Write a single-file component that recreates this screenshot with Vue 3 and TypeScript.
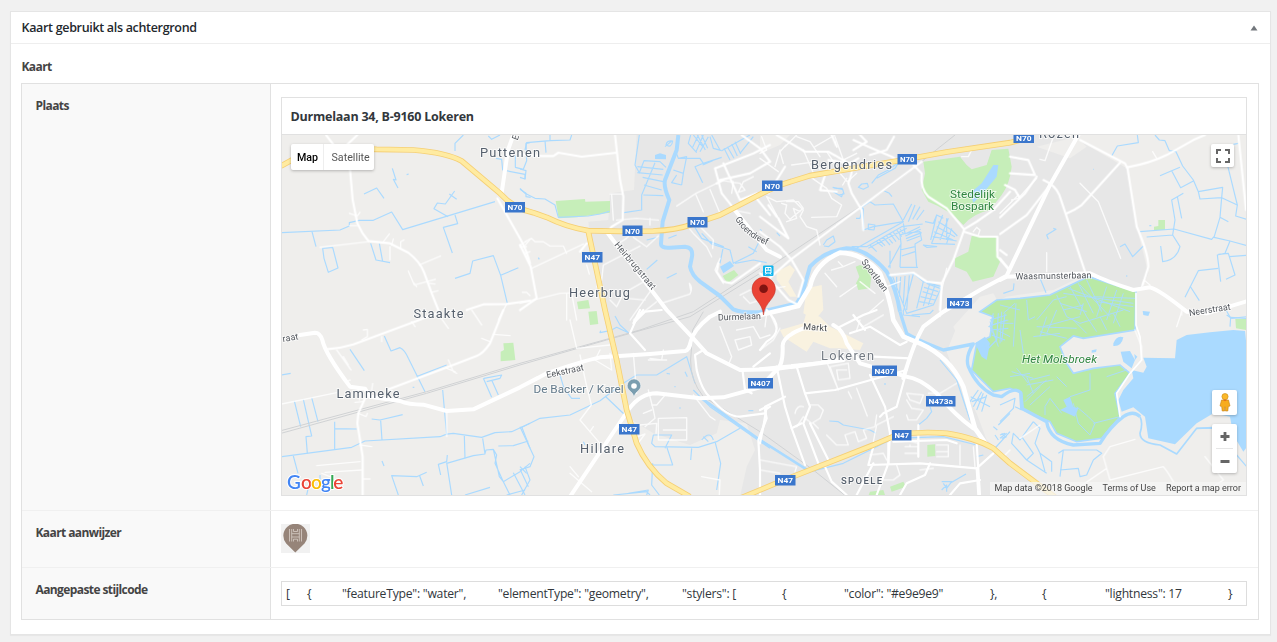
<script setup lang="ts">
interface Label { t: string; x: number; y: number; w: number; s?: number; r?: number; c?: string }
interface Shield { t: string; x: number; y: number; w: number }
interface Tile { x: number; y: number; water: string[]; minor: string[]; road: string[] }

const tiles: Tile[] = [
  {
    x: 0, y: 0,
    water: [
      'M5 308L180 300L208 288V278L238 271H280L335 246L368 299L645 215', 'M337 115L348 150L340 148L354 174', 'M252 192L290 174L312 205',
      'M504 260L462 236L472 219L496 222L524 183M508 192L530 208', 'M525 255L533 281L490 292L517 369', 'M96 305L108 350',
      'M128 355L158 352L174 414L145 427L132 385Z', 'M272 340L288 390L330 398M298 340L308 395',
      'M525 445L570 430L578 393L640 377L662 436L715 413M662 436L682 520', 'M550 15L525 40V63', 'M625 18L635 28L660 15',
      'M648 85L665 88L668 120L735 133V148', 'M720 178L738 190V200L752 202', 'M380 134L386 132', 'M706 75V112L730 118L740 92L738 40L750 38',
    ],
    minor: [
      'M120 352L265 335', 'M310 335L328 312M335 345L340 327M362 355L362 335L372 330', 'M330 350V390', 'M418 405L482 378',
      'M208 250L232 258L240 247M208 287H232', 'M385 423L403 465L466 448M403 460L410 470M447 460L465 462M455 487L474 482',
      'M680 522L655 570', 'M732 350L750 328M735 370L750 365', 'M727 487L740 487L750 497',
    ],
    road: ['M138 15L165 50', 'M232 15L195 50', 'M210 118L218 210L232 280Q245 310 265 333L330 340L385 368Q420 395 432 427L455 490L475 540', 'M560 540L610 523L680 522L750 512', 'M652 205L720 325Q740 360 750 400'],
  },
  {
    x: 720, y: 0,
    water: [
      'M15 60L20 38L90 32V15M90 32L150 30L155 15M75 32L78 68', 'M0 117L18 122L15 147L0 142', 'M0 175L15 190L45 205L75 207L105 225L115 262L205 258L240 252L268 244',
      'M358 15L345 105L358 128L372 92L420 95L438 112', 'M352 110L430 118M352 128L428 135M368 142L430 155M372 165L425 180M370 195L430 197M405 98L365 195L365 240L312 248',
      'M435 50L455 33M438 45Q440 30 458 33Q455 55 438 45', 'M512 15L505 40L530 68M520 15L548 50M532 15L556 60M545 15L563 55M518 52L535 15M528 65L550 15M540 65L565 20M575 15L600 60M570 20L580 55L605 62',
      'M470 72L475 85L500 80L490 130L460 120M475 85L540 85L550 100L525 110L548 158M550 100L605 82M485 165L455 158L470 135M490 130L485 165M548 105L578 92',
      'M612 55L630 90M622 50L642 85M635 42L652 78M645 35L662 72M605 62L690 15M660 70L700 20',
      'M525 293L545 325L610 350L600 400M545 310L575 342L630 360L640 400L700 370L715 340M645 400L700 390L740 398M685 350L710 365',
      'M380 330L410 323M445 325L470 315M440 445L470 430M380 418L412 390', 'M55 383L58 388',
    ],
    minor: [
      'M15 335L35 325L45 335H70L90 348H130L140 370', 'M0 345L18 335M20 350L0 350', 'M35 415L190 342', 'M0 520L120 490L260 485M155 490L170 570', 'M140 490V570',
      'M270 192H305M275 195L280 270', 'M290 270L350 265L415 270M390 265V285', 'M340 322L380 350L415 318M325 320L300 338L320 325', 'M360 348L250 405L245 450',
      'M395 478L330 570M380 450L310 490L290 530L270 510', 'M430 518L510 492Q520 470 508 460L512 480', 'M200 405L208 432M230 470L248 468M340 570L410 515M375 510L320 505',
      'M470 228L528 190L590 160M528 195L550 245M570 178L600 250', 'M495 280L520 310L560 350L575 380M520 270L580 330L578 355M600 385L585 420L610 460',
      'M600 150L660 160L675 180L655 187L670 155L700 140M640 155L635 190', 'M690 250L640 240', 'M660 495L690 480L750 470M670 500L690 520L750 500',
    ],
    road: [
      'M0 72L65 78H100L115 68L185 80L290 68', 'M285 15L300 150L310 200L308 270L275 290L260 310', 'M0 345L32 410L50 505M0 540L50 505',
      'M585 115L700 70L750 45M585 115L605 190L645 240M610 100L660 210L710 190M600 150L690 130L750 95', 'M665 15L720 55L750 95', 'M705 200L750 255M590 160L610 150',
      'M180 365L200 340', 'M720 400L635 460L610 455L590 425L595 400',
    ],
  },
  {
    x: 1440, y: 0,
    water: [
      'M218 172L248 178L252 192L235 195M220 185L245 200L248 190M222 175H248', 'M295 172L305 162L322 160L325 170L310 178Z', 'M335 160L355 135L385 120L418 95L405 115L350 145',
      'M372 182L388 190L396 200', 'M190 345L200 330L220 318L225 335L205 350L192 348', 'M288 265H300L308 230L330 215L345 225L400 222L430 275L340 290L310 300V235',
      'M325 282L345 285L342 300L325 298Z', 'M290 355L430 275M275 350L320 350L425 290L488 282M325 355L440 295M330 345L350 365M350 335L368 350M358 330L375 347M370 322L390 345M380 318L398 340M390 310L408 335M400 307L418 330M410 300L425 320M420 297L430 310',
      'M430 280L435 310L420 315L423 340L420 412M435 310L480 305L485 330L465 342L470 410M435 312L480 290M436 318L482 298M438 326L485 308M440 333L480 318M420 412H474M390 362V415M385 412L423 342M420 360L465 350M425 378L465 365',
      'M430 270L455 222M445 275L465 225M458 268L480 230M470 270L492 240', 'M495 275L520 280L530 255L512 330M530 255L550 265M548 255L515 340L585 343M565 265L540 330M535 275L575 300L592 318M530 290L585 320M522 305L580 330M518 320L590 333M575 295L560 340M560 265V330',
      'M490 345L530 350L500 352Z', 'M400 435L460 430L490 455L545 470L520 525L440 550L398 440M410 440V480M422 440L418 500M435 438L430 520M448 436L440 540M460 432L430 545',
      'M490 455L470 535M500 460L540 475M492 472L535 485M488 485L530 498M482 500L525 510M478 515L518 522M510 458L490 528M525 465L505 525', 'M50 308L60 318', 'M0 298L5 302',
    ],
    minor: [
      'M0 85L55 125M45 110L60 60M0 70L20 60L5 20', 'M75 50L110 15M78 45L60 65L70 100M130 60L165 140', 'M110 20L150 35L180 80M165 50L225 15M200 65L230 110M225 20L250 90L290 70',
      'M150 140L200 175L215 205L245 225L230 260L155 262', 'M95 105L170 95L180 118M260 145L248 165M240 130L262 155L290 130',
      'M65 220L80 225L75 250L90 268L130 235L115 215H80M80 275L110 265L100 235L120 245', 'M20 200L50 215L100 210L130 240L120 260L140 290L170 300L180 345M85 325L55 265L20 200',
      'M215 420L250 410L235 395M250 410L285 395M195 430L230 470M0 480L75 470M300 455L345 490', 'M240 500L290 465M330 545L370 510', 'M380 470L420 455',
      'M635 60L625 80H605M600 55V65', 'M640 305L650 292L660 300L655 315', 'M560 415L545 480L540 560',
    ],
    road: [
      'M50 15L135 65L205 65L275 105Q280 120 265 160L275 190L305 240L310 300', 'M280 30L325 50L395 80L412 90', 'M330 75L380 60L402 20M215 15L230 50',
      'M485 95L90 390L0 470', 'M460 105L485 130Q480 175 505 200L560 235L610 295', 'M750 185L700 240L650 275L612 298', 'M612 300L580 390L545 460L540 540', 'M612 305L660 320L712 320L712 380L750 420',
      'M0 260L85 325L55 265M25 225L50 260M0 305L60 350L95 390L130 450L115 500', 'M0 430L50 470L85 510L115 525', 'M75 110L25 190', 'M200 120L180 180L230 185',
      'M205 90L270 100L295 85', 'M300 15L320 35L280 60', 'M390 435L460 428L500 455L545 460',
    ],
  },
  {
    x: 2160, y: 0,
    water: [
      'M335 78L352 48L415 38L412 15', 'M465 15L478 30L495 32L508 62L528 65L548 108L580 150L595 185L668 172L665 203L712 225L680 95M480 137L515 122L540 112M515 122L542 173L580 153M595 185L600 207L665 203',
      'M712 225L707 258L740 268M665 203L660 262L685 275M660 262L642 322L690 333L740 347M420 305L522 297L635 328L642 320', 'M550 190L515 210L525 270L518 315L540 350Q530 390 488 395L482 348M532 200L545 265M440 321L518 315',
      'M690 333L675 370L652 375L662 455M655 373L685 370L705 435L678 448M688 380L740 376', 'M655 415L595 422L555 502M570 468L598 512', 'M360 350L375 342L398 380L430 348', 'M145 328L140 315L168 298L160 295', 'M700 43L715 40', 'M378 438H382', 'M120 445L138 488', 'M10 490L40 480L42 460', 'M680 555L695 565L740 560', 'M280 118H282', 'M448 287H454',
    ],
    minor: ['M162 15L135 92L120 88', 'M240 160L295 215L362 385', 'M140 368V425', 'M545 545L530 590', 'M425 470L432 450L450 465', 'M458 65L470 85', 'M110 145L55 205L35 210M55 195L0 250'],
    road: [
      'M240 30L375 100L382 115M382 112Q450 100 500 75L580 30L615 15', 'M382 112L410 290Q445 370 445 410L428 465', 'M360 98L245 225Q225 240 200 250', 'M130 150Q165 165 178 195L255 425',
      'M715 15L738 240', 'M30 80L85 90L105 135L30 130M110 140L75 190L0 262M15 165L45 180L60 205M150 165L80 255L0 312', 'M0 385L25 418', 'M0 360L20 375',
    ],
  },
  {
    x: 0, y: 540,
    water: [
      'M5 195L32 190', 'M313 78L333 123L360 113Q375 120 385 145L435 245M410 200L500 165', 'M210 118L253 182', 'M398 232H403', 'M488 240L500 375', 'M275 327L300 330L368 314M302 332L306 390',
      'M5 440L215 412L255 393L480 380Q500 370 520 370L605 382L645 368L695 365L750 340', 'M43 273L62 350M70 268L95 378L78 380L82 430M95 263L114 335M164 335V417M164 356L230 357', 'M40 438L54 490M120 495V520M88 520L80 555',
      'M306 453L312 468', 'M355 555L335 497L410 500L440 487M418 495L430 528', 'M482 495L475 463L500 455L502 435M500 458L515 555M500 460L580 437L615 432L608 385M615 430L618 420L640 418L658 500L670 515L720 485L750 460M640 418L650 435L645 460L670 515L690 555',
      'M553 378L555 445M555 555L630 532M655 408L700 407L745 393M725 350L750 415', 'M700 488L735 555M720 478L745 530M680 555L735 540', 'M610 205L635 262M635 210L655 255M612 205L665 195L660 205L620 215', 'M740 490L720 470',
    ],
    minor: ['M170 120L213 180M190 140L205 165', 'M250 60L262 58V80L245 90M305 80V95', 'M5 282L170 248', 'M225 277L250 275M275 240L278 220M230 230L240 255L238 270', 'M235 310L258 320L262 310', 'M110 467L240 455M135 487L245 480M250 507H270M240 405L275 410', 'M480 20L505 55M575 0L605 45M395 35L405 50', 'M500 175L525 185M505 150L520 185L530 190M605 85L630 95M640 73L690 77', 'M500 310V380', 'M200 215L210 210M150 500L125 490'],
    road: ['M140 118Q180 115 220 103L410 33L480 5', 'M670 0L630 100Q610 130 590 138L500 172L320 240', 'M255 265L235 310L232 340L248 440L248 555'],
  },
  {
    x: 720, y: 540,
    water: [
      'M285 18L300 45L325 68L290 52L270 62L240 68L242 62', 'M120 195L132 235L155 265L180 265', 'M0 355L60 325L150 315L240 272L270 250L310 220L350 195L410 195L500 140L525 220M255 258L315 315', 'M0 350L42 440L30 470L0 480M15 470L30 510L5 555',
      'M440 190L450 192M495 185L502 200M465 228V232M480 292V296', 'M280 555L380 545L390 555M325 550L385 540L380 555M398 460L395 525L418 555',
      'M435 415L455 375L400 375L395 400L405 410L535 412L590 395L660 355M545 390Q570 360 580 390M550 380L565 395M515 415L512 450M585 395L602 460L590 540M440 410L458 465H398', 'M520 240L570 290L750 415', 'M685 302H700', 'M190 395L195 405',
    ],
    minor: ['M150 30L170 115L270 105', 'M180 135L198 220L214 285L180 330L240 400', 'M270 130L275 180L225 150L240 120M340 130L350 250', 'M430 120L425 150L390 145M440 150H385', 'M385 240L400 300L405 325L375 350M370 310L395 300M440 250L410 285H395', 'M415 325L500 323V390H415ZM430 360H500M360 345L410 340L408 370', 'M150 490L215 545M150 470L175 500', 'M520 255L570 320L585 330', 'M545 500L600 510L598 555', 'M210 365L220 350', 'M340 385L375 372L350 405', 'M645 90L690 80L695 105L655 120ZM600 50L635 140L625 165M650 60L700 50L720 85L750 75'],
    road: [
      'M370 0L350 25L330 70L375 120', 'M525 135L550 120L565 135M525 135L530 180Q545 240 570 262', 'M500 120L515 85', 'M668 185L675 240L695 250', 'M570 262Q620 320 660 320L735 310', 'M750 290L735 300L740 325L715 390L720 480L720 555', 'M750 130L700 170M360 0L340 40L375 5L425 0',
    ],
  },
  {
    x: 1440, y: 540,
    water: ['M455 15L510 10L520 0M430 0L430 15L480 20', 'M540 150L590 210L630 330', 'M208 333L235 335L250 345L330 360L348 370', 'M475 345L500 325L515 305L510 290', 'M655 240L630 275M665 245L640 290M670 250L650 300M680 255L665 305M632 260L690 290M635 275L680 260', 'M700 350L712 360M705 375L715 390M725 370L735 380M720 385L740 370M700 420L750 365M750 310L715 345', 'M0 388L150 485L250 460L350 410L400 385L550 380L650 405', 'M545 515L575 515L560 535L550 520M570 520L618 492M545 540L560 525L560 545', 'M650 440L670 435', 'M372 222H378', 'M700 10L690 50L710 90L680 120L670 100M690 30L740 15M695 45L745 30M690 60L745 55M695 75L735 90M715 10L710 90M735 10L725 95'],
    minor: ['M200 155L235 240L210 170L265 160L270 205L235 210L230 180L260 180M265 245L275 265M290 235L322 318', 'M150 285L175 285L190 300L180 325L155 340L130 320L110 350M105 310Q110 285 130 290M160 340L175 355', 'M200 375L230 405L265 405L255 375L285 365L295 395L320 385L310 360L345 350L350 315', 'M440 250L490 255L480 280L450 270L440 250M440 270L455 295L490 300L470 330L445 330L440 315', 'M435 410H475V440M435 430H470M450 405V410M530 405H565V440H530M530 425H565M600 405V465M640 410L645 470M440 390L475 400', 'M60 55L40 90L0 120M30 10L50 55', 'M15 50L20 10M300 30L290 60M310 50L370 15', 'M505 250L540 250L590 220', 'M400 320L350 345L340 395', 'M0 375L15 330M0 450L110 470L105 485M0 480L60 490', 'M330 435L370 430L380 450M410 465L420 495L400 510L360 510M480 480L520 475'],
    road: [
      'M50 170L75 290L95 355L135 465M110 170L135 250L150 290L130 340L175 460', 'M150 340L210 460', 'M0 300L20 290L10 350L0 400M15 290L75 260M95 355L125 340', 'M135 250L225 240L440 180', 'M330 195L375 290L390 370L385 460', 'M435 200L410 290L370 310L360 320',
      'M340 410L325 465L480 460L650 475L700 430M195 470L215 515L260 555M340 460L290 555M385 400V460L350 555M650 400L660 555M650 475L655 555', 'M510 460L495 495L440 520L420 555M660 510L600 520L570 555', 'M240 50L310 15L350 0M270 70L330 50L420 105L440 95M280 15L315 60', 'M340 140L450 145M20 0Q80 60 20 95L0 120',
      'M475 345L475 440M400 395L560 390L590 400', 'M0 175L55 170L200 155L250 140',
    ],
  },
  {
    x: 2160, y: 540,
    water: [
      'M690 50L692 22L740 25M678 0L692 25', 'M0 285L45 265L40 295L0 335M45 290L65 300', 'M100 335L60 390L40 370L35 400L80 450L100 430L65 380M100 335L120 355L105 400L120 430L155 455V485M120 430L135 485M80 450L140 490', 'M175 430L190 420L180 500M190 420H290L305 430L280 450L260 495L240 500L235 475L180 480M280 450L300 433M0 375L15 370M5 385L20 380', 'M740 470L710 435', 'M590 355H640',
    ],
    minor: ['M405 60L425 110L425 150', 'M545 0L545 15', 'M310 440L330 410L405 388M310 440L330 510L490 470Q500 480 520 515M320 475L240 530', 'M615 440L670 510L640 530', 'M120 345L60 385', 'M10 440L30 420'],
    road: [],
  },
]

const marsh: string[] = [
  'M2240 510L2245 570L2265 560M2330 495L2360 560L2400 580L2530 540', 'M2270 570L2320 510L2360 500M2290 590L2400 560', 'M2370 470L2420 560M2395 460L2440 550M2420 450L2465 545M2350 490L2560 520M2365 475L2550 545M2400 465L2490 560',
  'M2480 470L2450 560M2510 480L2480 570M2530 490L2500 580M2380 570L2420 610M2420 560L2450 605M2460 560L2480 600M2500 550L2520 590', 'M2270 590L2390 595M2280 605L2360 625M2260 620L2340 610M2300 560L2280 620M2330 540L2300 610',
  'M2190 740L2250 730M2195 725L2260 745M2210 715L2245 760', 'M2240 740L2260 790M2240 765L2320 750M2240 800L2300 750M2235 815L2280 770M2250 825L2310 770', 'M2295 855V830L2310 805L2345 850M2370 800L2430 780V730M2380 820L2395 880L2430 915L2445 880L2425 860L2390 830M2440 880L2520 860M2480 740L2540 720', 'M2250 750L2310 735M2330 740L2360 770',
  'M2160 580H2200M2170 550L2205 520M2150 600L2190 620M2125 590L2180 570M2130 575L2155 650M2165 545L2160 640', 'M2410 520L2400 555M2440 500L2565 505M2450 515L2560 530M2340 520L2420 545M2350 540L2410 525', 'M2208 520L2200 650M2220 600L2230 670M2160 525L2220 540',
]

const parks: string[] = [
  'M827 213L915 207L916 215L990 213V248L890 262L836 265Z', 'M891 515L925 510L930 535L895 538Z', 'M925 545L950 543L955 582L930 585Z', 'M1328 438L1362 420L1375 435L1342 460Z', 'M670 640L700 638L706 690L662 694V665L672 660Z',
  'M1727 410L1740 405L1765 415L1775 425L1770 475L1735 480L1728 460L1738 440Z', 'M1930 95L2040 80L2060 105L2075 118L2120 105L2135 60L2185 56L2195 110Q2190 160 2165 195L2130 240Q2080 250 2050 285Q2010 240 1945 215L1925 180L1935 130Z',
  'M2075 318L2150 322L2148 360L2160 395L2140 440L2078 455L2060 425L2025 410V385L2065 365Z', 'M2635 270H2655V300H2622V290L2635 288Z', 'M2866 567H2900V600L2868 595Z', 'M1942 945L1965 943L1966 978L1942 980Z', 'M1766 1095L1770 1085L1810 1080L1815 1095Z', 'M1830 1070L1870 1055L1878 1070L1835 1085Z',
]

const majors: string[] = [
  'M60 615L105 608Q120 608 127 630Q135 670 210 770L255 776L270 800L360 813Q385 824 430 824L500 843L580 838L720 772L800 730Q900 695 960 682L1110 672L1215 663Q1230 660 1232 635Q1240 600 1290 560L1320 545',
  'M985 312L1160 540L1235 620L1280 670L1380 720L1480 718',
  'M870 1100L1045 840Q1080 790 1130 790L1260 805L1330 802L1440 772L1485 725Q1510 710 1508 650Q1505 620 1570 595',
  'M1480 718L1690 690', 'M1660 585Q1690 600 1700 640L1740 700L1880 740Q1920 745 1970 790Q2030 860 2080 895',
  'M2395 15L2310 165L2180 437L2100 480L1990 545L1930 590Q1900 640 1870 745',
  'M2160 450L2180 440L2430 430Q2480 455 2560 480L2610 472Q2640 480 2720 545L2780 550L2900 514',
  'M1360 235L1460 360L1500 380',
]

const highways: string[] = [
  'M3 108L40 88C120 60 200 54 290 58L400 60Q500 68 545 93L660 190Q700 235 760 248L800 262Q860 292 925 302L1020 304L1120 303Q1190 300 1230 285L1320 255L1450 188L1500 165L1590 137L1850 93L2000 66L2190 38L2240 25',
  'M925 305L975 540L1010 690L1040 840L1070 940Q1100 1010 1160 1060L1230 1100',
  'M1380 1105L1440 1080L1500 1055L1640 1000L1780 945L1850 915Q1920 903 2000 910Q2090 925 2140 955L2190 1000L2250 1045L2330 1105',
]

const labels: Label[] = [
  { t: 'Puttenen', x: 480, y: 157, w: 60 }, { t: 'Bergendries', x: 811, y: 168.5, w: 81 }, { t: 'Heerbrug', x: 569, y: 297, w: 61 }, { t: 'Staakte', x: 413.5, y: 318, w: 50 },
  { t: 'Lammeke', x: 336.5, y: 398, w: 63 }, { t: 'Hillare', x: 580, y: 453, w: 44 }, { t: 'Lokeren', x: 821, y: 359.5, w: 53, c: 'light' }, { t: 'Rozen', x: 1039, y: 138, w: 40 },
  { t: 'SPOELE', x: 841, y: 484, w: 41, s: 9.5, c: 'medium' }, { t: 'Markt', x: 803, y: 329.5, w: 24, s: 9, r: 4, c: 'dark' },
  { t: 'Durmelaan', x: 718, y: 320.5, w: 43, s: 9, r: -2, c: 'street' }, { t: 'Heirbrugstraat', x: 614, y: 245, w: 59, s: 9, r: 50, c: 'street' },
  { t: 'Eekstraat', x: 547, y: 378, w: 38, s: 9, r: -12, c: 'street' }, { t: 'Sportlaan', x: 861, y: 262, w: 38, s: 9, r: 53, c: 'street' },
  { t: 'Waasmunsterbaan', x: 1015.5, y: 279.5, w: 76, s: 9, r: -1, c: 'street' }, { t: 'Neerstraat', x: 1189.5, y: 316, w: 42, s: 9, r: -9, c: 'street' },
  { t: 'raat', x: 283, y: 342, w: 16, s: 9, r: -10, c: 'street' },
  { t: 'De Backer / Karel', x: 533.5, y: 393, w: 90, s: 11.8, c: 'poi' },
  { t: 'Stedelijk', x: 950, y: 197.5, w: 45, s: 11.8, c: 'park' }, { t: 'Bospark', x: 951, y: 209.5, w: 43, s: 11.8, c: 'park' },
  { t: 'Het Molsbroek', x: 1022, y: 362.5, w: 75, s: 11.8, c: 'park italic' },
]

const shields: Shield[] = [
  { t: 'N70', x: 505, y: 202, w: 20 }, { t: 'N70', x: 622.5, y: 225.5, w: 20 }, { t: 'N70', x: 687.5, y: 217, w: 20 }, { t: 'N70', x: 762, y: 180.5, w: 20.5 },
  { t: 'N70', x: 897.5, y: 154, w: 19.5 }, { t: 'N70', x: 1013.5, y: 132.5, w: 20.5 }, { t: 'N47', x: 582, y: 252, w: 20.5 }, { t: 'N47', x: 619, y: 424, w: 20.5 },
  { t: 'N47', x: 892, y: 430, w: 19.5 }, { t: 'N47', x: 775, y: 475, w: 20.5 }, { t: 'N407', x: 748, y: 378, w: 25 }, { t: 'N407', x: 872, y: 365.5, w: 25 },
  { t: 'N473', x: 947, y: 298, w: 25 }, { t: 'N473a', x: 926, y: 396, w: 29.5 },
]

const logo = [
  { t: 'G', x: 287, c: '#4285f4' }, { t: 'o', x: 301, c: '#ea4335' }, { t: 'o', x: 311, c: '#fbbc05' },
  { t: 'g', x: 321, c: '#4285f4' }, { t: 'l', x: 330, c: '#34a853' }, { t: 'e', x: 333.3, c: '#ea4335' },
]

const style: string[] = ['[', '{', '"featureType": "water",', '"elementType": "geometry",', '"stylers": [', '{', '"color": "#e9e9e9"', '},', '{', '"lightness": 17', '}']
</script>

<template>
  <div class="page">
    <section class="postbox">
      <header class="handle">
        <h2>Kaart gebruikt als achtergrond</h2>
        <svg width="8" height="6" viewBox="0 0 8 6"><path d="M0.5 5.5L4 0.5L7.5 5.5Z" fill="#72777c" /></svg>
      </header>
      <div class="field-title">Kaart</div>
      <div class="fields">
        <div class="row place">
          <div class="name">Plaats</div>
          <div class="value">
            <div class="map-box">
              <div class="address">Durmelaan 34, B-9160 Lokeren</div>
              <div class="map">
                <svg class="canvas" viewBox="282 135 964 360" width="964" height="360">
                  <g transform="translate(280 130) scale(0.333333)">
                    <path fill="#e7e7e7" d="M1070 15L1062 180L990 190L985 270L925 275L930 320L975 540L1040 860L1120 910L1230 945L1310 910L1320 870L1400 880L1425 960L1400 1010L1380 1100H2320L2240 1030L2120 930L2090 850L2020 720L2000 665L2030 590L2090 540L2180 500L2320 480L2425 430L2560 480L2590 470L2605 430L2570 290L2540 115L2395 30L2340 15Z" />
                    <path fill="#efeeec" d="M1440 15H1530L1500 45L1440 70ZM2270 50L2390 20L2420 50L2370 85ZM2100 500L2140 490L2160 525L2110 560L2090 640L2040 630L2020 590Z" />
                    <path fill="#f9f2e0" d="M1500 600L1570 580L1580 545L1620 560L1650 590L1690 610L1750 640L1740 660L1680 655L1650 655L1600 635L1580 665L1540 640L1510 620ZM1490 425L1530 405L1545 420L1525 455L1550 500L1530 500L1490 450ZM1580 475L1625 465L1630 540L1605 570L1570 550Z" />
                    <path v-for="d in parks" :key="d" :d="d" fill="#c6eeb9" />
                    <path fill="#b9e9a6" stroke="#aadaff" stroke-width="5" d="M2100 545L2150 510L2220 505L2310 495L2425 440L2568 485L2565 600L2410 625L2380 618L2340 650L2360 700L2380 730L2440 715L2520 705L2550 730L2505 790L2520 860L2465 925L2390 935L2330 910L2310 875L2230 840L2225 790L2190 775L2140 785L2075 720L2090 640L2130 620L2140 560Z" />
                    <g class="water" stroke-width="2.8"><path v-for="d in marsh" :key="d" :d="d" /></g>
                    <path fill="#aadaff" d="M2085 640L2115 620L2130 640L2120 690L2105 680ZM2350 810L2370 800L2380 830L2395 835L2385 860L2340 840L2360 830ZM2500 640Q2510 615 2530 622Q2525 650 2500 648ZM2522 665L2550 663L2565 690L2555 715L2530 695ZM2563 672L2572 680L2565 690ZM2435 661L2450 658L2448 666L2435 668ZM2588 543L2610 545L2605 558L2590 555Z" />
                    <path fill="#aadaff" d="M2590 683L2685 685L2690 630L2720 615L2790 607L2860 600L2895 603L2902 670V950L2890 965L2860 915L2850 860L2800 850L2750 880L2685 943L2605 925L2595 860L2560 832L2525 845L2515 810L2530 780L2560 745L2555 720L2590 728L2600 710Z" />
                    <path fill="#aadaff" d="M1125 75L1140 70L1158 75V88L1125 87ZM1320 410L1350 393L1362 408L1330 430ZM2070 190L2105 160L2140 105L2155 105L2150 140L2100 200L2080 218Z" />
                    <g class="water" stroke-width="3.5">
                      <g v-for="t in tiles" :key="`${t.x}-${t.y}-w`" :transform="`translate(${t.x} ${t.y})`"><path v-for="d in t.water" :key="d" :d="d" /></g>
                    </g>
                    <g class="rail">
                      <path d="M3 910L440 790L720 705L980 630L1230 560L1440 430L1830 170L2025 15" />
                      <path d="M3 902L440 785L720 700L1080 600L1240 545L1440 415" />
                      <path d="M1270 545L1238 600L1232 690Q1230 750 1270 800L1440 905L1600 1020L1700 1100" />
                    </g>
                    <g class="water">
                      <path stroke-width="12" d="M1195 15L1190 60L1155 150Q1150 170 1168 210L1148 275L1143 340Q1142 355 1170 353L1215 350Q1240 352 1236 380L1230 410Q1235 435 1260 455L1320 498L1360 538Q1390 550 1440 546L1550 520Q1565 500 1570 480L1590 410Q1630 365 1700 355Q1760 355 1820 425Q1850 480 1860 545" />
                      <path stroke-width="10" d="M1860 545L1880 610Q1900 625 1990 660L2080 642Q2055 680 2065 710Q2090 770 2140 795L2165 800Q2205 768 2222 788L2225 835L2300 875Q2308 930 2380 945L2460 940Q2490 890 2530 860Q2560 840 2580 860" />
                      <path stroke-width="5" d="M2580 860Q2590 880 2580 910Q2580 940 2640 945L2690 972L2750 895L2800 893" />
                      <path stroke-width="8" d="M1265 805L1440 930L1590 1025" />
                    </g>
                    <g class="road" stroke-width="4.2" opacity="0.8">
                      <g v-for="t in tiles" :key="`${t.x}-${t.y}-m`" :transform="`translate(${t.x} ${t.y})`"><path v-for="d in t.minor" :key="d" :d="d" /></g>
                    </g>
                    <g class="road" stroke-width="6.5">
                      <g v-for="t in tiles" :key="`${t.x}-${t.y}-r`" :transform="`translate(${t.x} ${t.y})`"><path v-for="d in t.road" :key="d" :d="d" /></g>
                      <path stroke-width="5" d="M2550 730L2510 790L2520 860M2550 730L2585 690L2580 620L2568 585V490" />
                    </g>
                    <g class="road" stroke-width="12">
                      <path v-for="d in majors" :key="d" :d="d" />
                      <path d="M700 15L684 60L664 195" />
                      <path stroke-width="14" d="M1440 555L1555 528L1590 470Q1605 400 1680 368Q1750 370 1800 430Q1830 500 1840 570L1870 620L1920 640Q2010 680 2050 770L2085 895L2120 945" />
                    </g>
                    <g class="highway-case"><path v-for="d in highways" :key="d" :d="d" /></g>
                    <g class="highway"><path v-for="d in highways" :key="d" :d="d" /></g>
                  </g>

                  <path id="groendreef" fill="none" d="M735 219Q746 238 770 246" />
                  <text class="label street" font-size="9"><textPath href="#groendreef" textLength="42">Groendreef</textPath></text>
                  <text
                    v-for="l in labels" :key="l.t" class="label" :class="l.c" :x="l.x" :y="l.y" :font-size="l.s ?? 12.8"
                    :textLength="l.w" :transform="`rotate(${l.r ?? 0} ${l.x} ${l.y})`"
                  >{{ l.t }}</text>
                  <g v-for="(s, i) in shields" :key="i">
                    <rect :x="s.x" :y="s.y" :width="s.w" height="10.5" fill="#3a76cc" />
                    <text class="shield" :x="s.x + 2.5" :y="s.y + 8.2" :textLength="s.w - 5" lengthAdjust="spacingAndGlyphs">{{ s.t }}</text>
                  </g>

                  <text x="512" y="139" class="label street" font-size="9" transform="rotate(-70 516 136)">E</text>
                  <path d="M634 397.5C633 391 627.2 391 627.2 385.7A6.8 6.8 0 0 1 640.8 385.7C640.8 391 635 391 634 397.5Z" fill="#7b9eb0" stroke="#fff" stroke-width="0.5" />
                  <circle cx="634" cy="386" r="2.8" fill="#fff" />
                  <rect x="763" y="265.5" width="10.5" height="10.5" rx="1" fill="#12b5ee" />
                  <path d="M765.5 267.5H771V273H765.5ZM765.5 270.2H771M768.2 267.5V270M766.5 273L765.5 274.5M770 273L771 274.5" fill="none" stroke="#fff" />
                  <path d="M763.5 315C762.5 302 752 299 752 289A11.7 11.7 0 0 1 775.4 289C775.4 299 764.8 302 763.5 315Z" fill="#ea4335" stroke="#b8352a" stroke-width="0.5" />
                  <circle cx="763.6" cy="288.7" r="4.3" fill="#811411" />
                  <text v-for="(g, i) in logo" :key="i" class="logo" :x="g.x" y="489" :fill="g.c">{{ g.t }}</text>
                </svg>

                <div class="types"><b>Map</b><span>Satellite</span></div>
                <div class="control fullscreen"><svg width="14" height="14" viewBox="0 0 14 14"><path d="M1 5V1H5M9 1H13V5M13 9V13H9M5 13H1V9" fill="none" stroke="#666" stroke-width="2" /></svg></div>
                <div class="control pegman">
                  <svg width="12" height="19" viewBox="0 0 12 19">
                    <circle cx="6" cy="3.6" r="3.1" fill="#fbb829" stroke="#c98a12" stroke-width="0.6" />
                    <path d="M2.5 7H9.5L11 13L9.3 13.5L8.8 18H6.4V14H5.6V18H3.2L2.7 13.5L1 13Z" fill="#f7ac1d" stroke="#c28216" stroke-width="0.6" />
                    <path d="M4 6.8L6 8.3L8 6.8Z" fill="#e5641f" />
                  </svg>
                </div>
                <div class="control zoom">
                  <svg width="25" height="49" viewBox="0 0 25 49"><path d="M8.5 12.5H17.5M13 8V17M8.5 37.5H17.5" stroke="#666" stroke-width="2.8" /><path d="M4 24.5H21" stroke="#e6e6e6" /></svg>
                </div>
                <div class="legal"><span>Map data ©2018 Google</span><span>Terms of Use</span><span>Report a map error</span></div>
              </div>
            </div>
          </div>
        </div>
        <div class="row marker">
          <div class="name">Kaart aanwijzer</div>
          <div class="value">
            <svg class="pin" width="29" height="29" viewBox="0 0 29 29">
              <rect width="29" height="29" fill="#f1f1f1" />
              <path d="M14.3 28.5L5.2 19.5A12 12 0 1 1 23.5 19.5Z" fill="#968479" />
              <path d="M8.5 5V17.5M20.5 5V17.5M10.7 5V17.5M18.3 5V17.5M10.7 9.7H18.3M10.7 13H18.3M12.5 5V7.5H16.5V5M12.5 17.5V15.2H16.5V17.5" fill="none" stroke="#d8cec7" stroke-width="0.8" />
            </svg>
          </div>
        </div>
        <div class="row code">
          <div class="name">Aangepaste stijlcode</div>
          <div class="value"><div class="input"><span v-for="(s, i) in style" :key="i">{{ s }}</span></div></div>
        </div>
      </div>
    </section>
  </div>
</template>

<style>
body { margin: 0; background: #f1f1f1; }
</style>

<style scoped>
* { box-sizing: border-box; }
.page { height: 642px; padding: 11px 6px 0 10px; background: #f1f1f1; overflow: hidden; font-family: "Open Sans", "Noto Sans", sans-serif; font-size: 13px; color: #444; }
.postbox { height: 624px; background: #fff; border: 1px solid #e5e5e5; box-shadow: 0 1px 1px rgba(0, 0, 0, 0.04); }
.handle { display: flex; align-items: center; justify-content: space-between; height: 32px; padding: 1px 12px 0 10.5px; border-bottom: 1px solid #eee; }
h2 { margin: 0; font-size: 12.5px; line-height: 18px; font-weight: 600; letter-spacing: -0.32px; color: #23282d; }
.field-title { height: 39px; padding: 14px 0 0 10.5px; font-size: 12px; line-height: 18px; font-weight: 700; letter-spacing: -0.6px; }
.fields { width: 1238px; margin-left: 10px; height: 537px; border: 1px solid #e1e1e1; }
.row { display: grid; grid-template-columns: 248px 1fr; }
.row + .row { border-top: 1px solid #f0f0f0; }
.place { height: 426px; }
.marker { height: 57px; }
.code { height: 52px; }
.name { padding: 13px 13.5px; background: #f9f9f9; font-size: 12px; line-height: 18px; font-weight: 700; letter-spacing: -0.6px; }
.value { padding: 13px 10px; border-left: 1px solid #e1e1e1; }
.map-box { width: 966px; border: 1px solid #e1e1e1; }
.address { height: 37px; padding-left: 8.5px; border-bottom: 1px solid #e1e1e1; font-size: 12.5px; line-height: 37px; font-weight: 700; letter-spacing: -0.23px; color: #32373c; }
.map { position: relative; height: 360px; overflow: hidden; background: #efeeec; font-family: Roboto, sans-serif; }
.canvas { display: block; }
.water { fill: none; stroke: #aadaff; stroke-linejoin: round; }
.road { fill: none; stroke: #fff; stroke-linejoin: round; stroke-linecap: round; }
.rail { fill: none; stroke: #d0d2d4; stroke-width: 3; }
.highway-case { fill: none; stroke: #f5cf75; stroke-width: 17; stroke-linejoin: round; }
.highway { fill: none; stroke: #ffeba1; stroke-width: 12; stroke-linejoin: round; }
.label { fill: #56606d; stroke: #fff; stroke-width: 1.8px; stroke-opacity: 0.7; paint-order: stroke; font-family: Roboto, sans-serif; }
.label.light { fill: #747b84; }
.label.medium { font-weight: 500; }
.label.street { fill: #54585e; }
.label.dark { fill: #45494e; }
.label.poi { fill: #62798a; }
.label.park { fill: #2f8540; }
.label.italic { font-style: italic; }
.shield { fill: #fff; font: 700 8px Roboto, sans-serif; }
.logo { font: 600 19px Lato, sans-serif; stroke: #fff; stroke-width: 2px; paint-order: stroke; }
.types { position: absolute; left: 9px; top: 9px; display: flex; height: 26px; background: #fff; border-radius: 2px; box-shadow: 0 1px 3px rgba(0, 0, 0, 0.25); font-size: 10.7px; line-height: 27px; }
.types b { width: 33px; padding-left: 6px; border-right: 1px solid #eee; font-weight: 500; color: #000; }
.types span { width: 50px; padding-left: 7.5px; color: #565656; }
.control { position: absolute; display: flex; align-items: center; justify-content: center; background: #fff; border-radius: 2px; box-shadow: 0 1px 3px rgba(0, 0, 0, 0.25); }
.fullscreen { left: 929px; top: 9px; width: 23px; height: 23px; }
.pegman { left: 930px; top: 255px; width: 25px; height: 25px; }
.zoom { left: 930px; top: 289px; width: 25px; height: 49px; }
.legal { position: absolute; right: 0; bottom: 0; display: flex; height: 13px; background: rgba(245, 245, 245, 0.75); font-size: 9px; line-height: 13px; color: #444; white-space: nowrap; }
.legal span { padding: 0 5px; }
.pin { display: block; }
.input { display: grid; grid-template-columns: 21px 35px 156px 184px 100px 62px 146px 52px 63px 123px 10px; width: 966px; height: 25px; padding-left: 4px; border: 1px solid #ddd; font-size: 12.2px; line-height: 24px; letter-spacing: -0.25px; color: #32373c; white-space: pre; }
</style>
